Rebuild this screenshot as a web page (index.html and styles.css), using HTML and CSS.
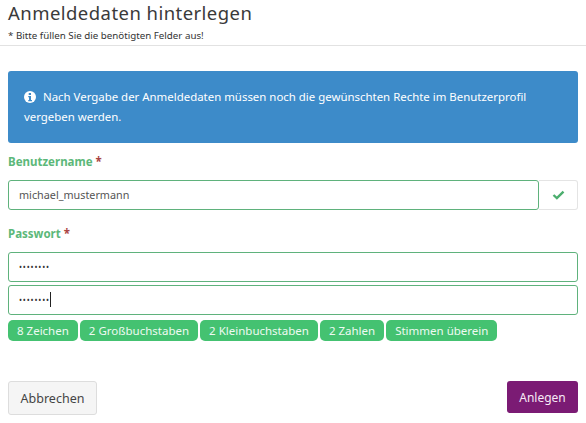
FILE: index.html
```html
<!DOCTYPE html>
<html lang="de">
<head>
<meta charset="utf-8">
<title>Anmeldedaten hinterlegen</title>
<link rel="stylesheet" href="styles.css">
</head>
<body>
<header class="head">
  <h1 class="title">Anmeldedaten hinterlegen</h1>
  <p class="hint">* Bitte füllen Sie die benötigten Felder aus!</p>
</header>
<main class="body">
  <div class="alert">
    <svg class="info" viewBox="0 0 24 24" width="12" height="12"><circle cx="12" cy="12" r="12" fill="#fff"/><rect x="9.5" y="4" width="4.5" height="4" fill="#3d8bc9"/><path d="M8.5 10h5.5v8h2v2.5H8.500V18h1.500v-5.500H8.500z" fill="#3d8bc9"/></svg>
    Nach Vergabe der Anmeldedaten müssen noch die gewünschten Rechte im Benutzerprofil vergeben werden.
  </div>
  <label class="label">Benutzername <span class="req">*</span></label>
  <div class="group">
    <div class="field grow">michael_mustermann</div>
    <div class="addon"><svg viewBox="0 0 14 11" width="13" height="10"><path d="M1.500 5.500L5.200 9 12.500 1.800" fill="none" stroke="#4cae6e" stroke-width="2.600"/></svg></div>
  </div>
  <label class="label second">Passwort <span class="req">*</span></label>
  <div class="field pw"><span class="dots">••••••••</span></div>
  <div class="field pw gap"><span class="dots">••••••••</span><span class="caret"></span></div>
  <div class="badges">
    <span class="badge">8 Zeichen</span>
    <span class="badge">2 Großbuchstaben</span>
    <span class="badge">2 Kleinbuchstaben</span>
    <span class="badge">2 Zahlen</span>
    <span class="badge">Stimmen überein</span>
  </div>
  <div class="actions">
    <button class="btn cancel" type="button">Abbrechen</button>
    <button class="btn create" type="button">Anlegen</button>
  </div>
</main>
</body>
</html>
```

FILE: styles.css
```css
* { box-sizing: border-box; }
html, body { margin: 0; padding: 0; background: #fff; }
body { width: 586px; height: 423px; overflow: hidden; font-family: "Noto Sans", "Open Sans", sans-serif; color: #333; }
.head { height: 46px; padding: 0 8px; border-bottom: 1px solid #e2e2e2; }
.title { margin: 0; font-size: 18.500px; line-height: 25px; font-weight: 400; letter-spacing: 0.450px; color: #3a3a3a; }
.hint { margin: 5px 0 0; font-size: 9.750px; line-height: 12px; color: #333; }
.body { padding: 25px 8px 0; }
.alert { height: 72px; padding: 16px 8px 0 16px; background: #3d8bc9; border-radius: 3px; color: #fff; font-size: 11.430px; line-height: 20px; }
.info { vertical-align: -1.500px; margin-right: 4px; }
.label { display: block; margin-top: 10px; height: 17px; font-size: 11.500px; line-height: 17px; font-weight: 700; color: #5cb879; }
.label.second { margin-top: 15px; }
.req { color: #a94442; }
.group { display: flex; margin-top: 10px; }
.grow { flex: 1; }
.field { height: 30px; padding: 0 10px; border: 1px solid #5fb27c; border-radius: 3px; font-size: 10.800px; line-height: 28px; color: #555; }
.pw { margin-top: 10px; }
.pw.gap { margin-top: 3px; }
.dots { font-size: 8px; letter-spacing: 0.850px; color: #333; vertical-align: 1px; }
.caret { display: inline-block; width: 1px; height: 15px; background: #222; vertical-align: -3px; margin-left: 0; }
.addon { width: 39px; height: 30px; display: flex; align-items: center; justify-content: center; border: 1px solid #e4e4e4; border-left: 0; border-radius: 0 3px 3px 0; }
.badges { display: flex; gap: 2px; margin-top: 5px; }
.badge { height: 21px; padding: 0 9px; background: #44c271; border-radius: 5px; color: #eefaf2; font-size: 11.500px; line-height: 21px; }
.actions { display: flex; justify-content: space-between; align-items: flex-start; margin-top: 40px; }
.btn { font-family: inherit; font-size: 12px; border-radius: 3px; padding: 0; }
.cancel { width: 89px; height: 34px; background: #f5f5f5; border: 1px solid #ddd; color: #444; font-size: 12.500px; }
.create { width: 71px; height: 32px; background: #7b1b74; border: 0; color: #f7eaf6; }
```
